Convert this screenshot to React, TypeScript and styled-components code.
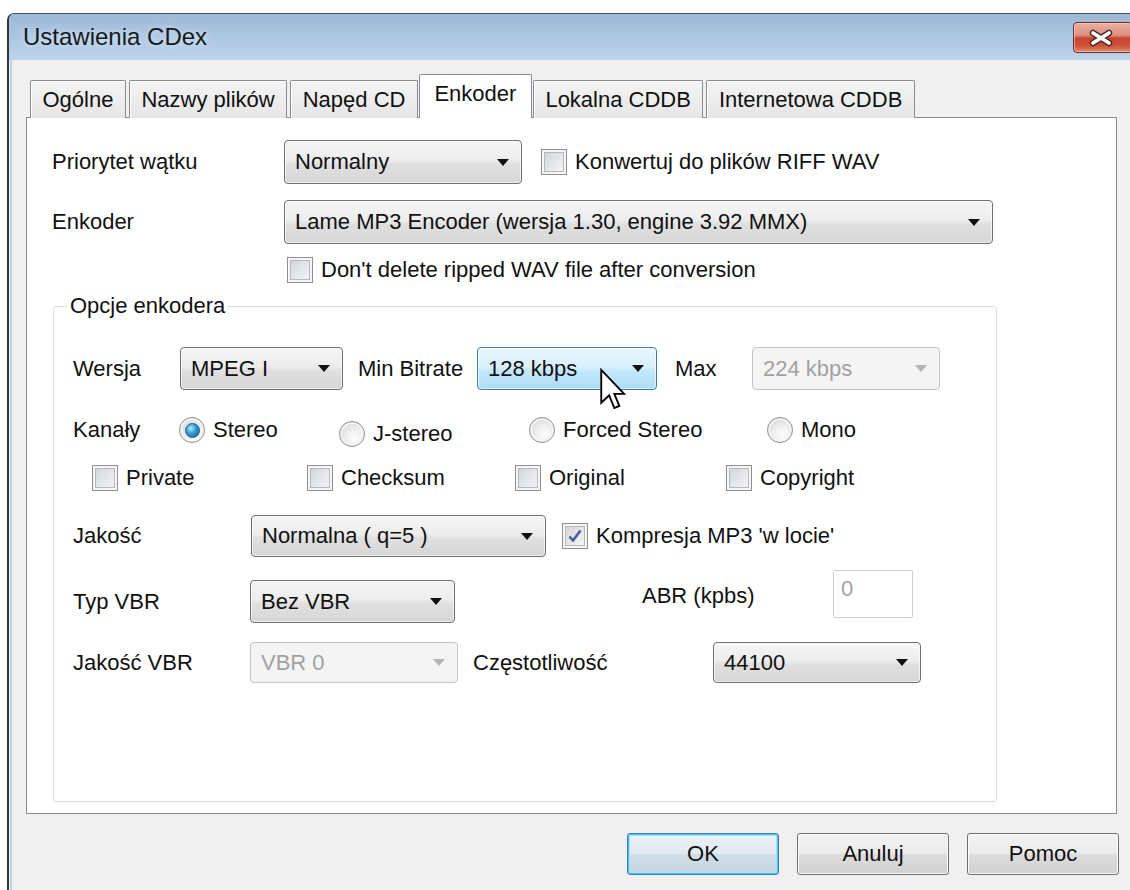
import React from "react";
import styled, { createGlobalStyle, css } from "styled-components";

const GlobalStyle = createGlobalStyle`
  html, body {
    margin: 0;
    padding: 0;
    background: #ffffff;
  }
  body {
    font-family: "Liberation Sans", Arial, sans-serif;
    color: #000;
  }
  * {
    box-sizing: border-box;
  }
`;

const Page = styled.div`
  width: 1130px;
  height: 890px;
  overflow: hidden;
  padding: 13px 0 0 7px;
`;

const Window = styled.div`
  width: 1140px;
  height: 900px;
  display: flex;
  flex-direction: column;
  border-top: 1px solid #44505e;
  border-left: 2px solid #2f3740;
  border-top-left-radius: 7px;
  overflow: hidden;
  background: #f0f0f0;
`;

const TitleBar = styled.div`
  height: 46px;
  flex: none;
  display: flex;
  align-items: center;
  justify-content: space-between;
  padding: 0 14px 0 14px;
  background: linear-gradient(#9db8d6, #b0c9e4 60%, #bdd3ea);
`;

const Caption = styled.span`
  font-size: 24px;
  color: #141a22;
  text-shadow: 0 0 6px rgba(255, 255, 255, 0.7);
  white-space: nowrap;
`;

const CloseButton = styled.div`
  width: 60px;
  height: 31px;
  margin-top: 1px;
  display: flex;
  align-items: center;
  padding-left: 13px;
  border: 1px solid #6d2e25;
  border-radius: 4px;
  background: linear-gradient(#eab0a4 0%, #df8f80 42%, #c9432f 52%, #cf5039 78%, #e2906f 100%);
  box-shadow: inset 0 0 0 1px rgba(255, 220, 210, 0.55);
`;

const Body = styled.div`
  flex: 1;
  padding: 15px 0 0 17px;
  background: #f0f0f0;
  box-shadow: inset 1px 0 0 #eef2f7, inset 3px 0 0 #bcd0e7;
`;

const TabStrip = styled.div`
  position: relative;
  z-index: 1;
  height: 43px;
  margin-bottom: -1px;
  padding-left: 4px;
  display: flex;
  align-items: flex-end;
`;

const Tab = styled.div<{ $active?: boolean }>`
  height: 38px;
  padding: 0 11.5px;
  margin-right: 3px;
  display: flex;
  align-items: center;
  font-size: 22px;
  white-space: nowrap;
  color: #111;
  border: 1px solid #898c95;
  border-bottom: none;
  border-radius: 2px 2px 0 0;
  background: linear-gradient(#f4f4f4, #e6e6e6);
  box-shadow: inset 1px 1px 0 #ffffff;
  ${({ $active }) =>
    $active &&
    css`
      height: 44px;
      padding: 0 14.5px 6px;
      margin: 0 1px 0 -2px;
      background: #ffffff;
      box-shadow: none;
    `}
`;

const Panel = styled.div`
  width: 1091px;
  height: 697px;
  padding: 22px 0 0 25px;
  background: #ffffff;
  border: 1px solid #898c95;
`;

const FormRow = styled.div<{ $h: number; $mt?: number; $ml?: number }>`
  display: flex;
  align-items: center;
  height: ${({ $h }) => $h}px;
  margin-top: ${({ $mt }) => $mt ?? 0}px;
  margin-left: ${({ $ml }) => $ml ?? 0}px;
`;

const FieldLabel = styled.span<{ $w?: number; $lift?: number; $pl?: number }>`
  flex: none;
  width: ${({ $w }) => ($w ? `${$w}px` : "auto")};
  padding-left: ${({ $pl }) => $pl ?? 0}px;
  margin-bottom: ${({ $lift }) => ($lift ?? 0) * 2}px;
  font-size: 22px;
  line-height: 26px;
  color: #111;
  white-space: nowrap;
`;

type ComboState = "normal" | "hot" | "disabled";

const ComboBox = styled.div<{ $w: number; $h?: number; $state?: ComboState; $ml?: number; $mt?: number }>`
  position: relative;
  flex: none;
  width: ${({ $w }) => $w}px;
  height: ${({ $h }) => $h ?? 43}px;
  margin-left: ${({ $ml }) => $ml ?? 0}px;
  margin-top: ${({ $mt }) => $mt ?? 0}px;
  display: flex;
  align-items: center;
  padding: 0 12px 0 10px;
  font-size: 22px;
  color: #111;
  border: 1px solid #707070;
  border-radius: 4px;
  background: linear-gradient(#f5f5f5 0%, #ededed 45%, #e0e0e0 55%, #d6d6d6 100%);
  box-shadow: inset 0 0 0 1px rgba(255, 255, 255, 0.6);
  ${({ $state }) =>
    $state === "hot" &&
    css`
      border-color: #3c7fb1;
      background: linear-gradient(#eaf6fd 0%, #d9f0fc 45%, #c4e8fc 55%, #aedcf6 100%);
    `}
  ${({ $state }) =>
    $state === "disabled" &&
    css`
      border-color: #c3c6c9;
      background: #f4f4f4;
      color: #a2a2a2;
      box-shadow: none;
    `}
`;

const ComboValue = styled.span`
  flex: 1;
  white-space: nowrap;
  overflow: hidden;
`;

const ComboArrow = styled.span<{ $disabled?: boolean }>`
  flex: none;
  width: 0;
  height: 0;
  border-left: 6px solid transparent;
  border-right: 6px solid transparent;
  border-top: 7px solid ${({ $disabled }) => ($disabled ? "#b4b4b4" : "#111")};
`;

const Pointer = styled.svg`
  position: absolute;
  left: 122px;
  top: 20px;
  z-index: 5;
`;

const CheckOption = styled.div<{ $w?: number; $ml?: number }>`
  flex: none;
  display: flex;
  align-items: center;
  gap: 8px;
  width: ${({ $w }) => ($w ? `${$w}px` : "auto")};
  margin-left: ${({ $ml }) => $ml ?? 0}px;
  font-size: 22px;
  color: #111;
  white-space: nowrap;
`;

const CheckSquare = styled.span`
  flex: none;
  width: 26px;
  height: 26px;
  display: flex;
  align-items: center;
  justify-content: center;
  border: 1px solid #8f8f8f;
  background: linear-gradient(135deg, #cdd0d4 0%, #e6e7e9 55%, #f8f8f8 100%);
  box-shadow: inset 0 0 0 2px #f6f6f6, inset 0 0 0 3px #b6bac0;
`;

const RadioOption = styled.div<{ $w?: number; $drop?: number }>`
  flex: none;
  display: flex;
  align-items: center;
  gap: 8px;
  width: ${({ $w }) => ($w ? `${$w}px` : "auto")};
  margin-top: ${({ $drop }) => ($drop ?? 0) * 2}px;
  font-size: 22px;
  color: #111;
  white-space: nowrap;
`;

const RadioCircle = styled.span<{ $on?: boolean }>`
  flex: none;
  width: 26px;
  height: 26px;
  border-radius: 50%;
  display: flex;
  align-items: center;
  justify-content: center;
  border: 1px solid #8e8f8f;
  background: radial-gradient(circle at 62% 68%, #fdfdfd 0%, #ececec 45%, #c8c9cb 100%);
  box-shadow: inset 0 0 0 2px #f4f4f4;
  ${({ $on }) =>
    $on &&
    css`
      &::after {
        content: "";
        width: 13px;
        height: 13px;
        border-radius: 50%;
        border: 1px solid #1b5a8c;
        background: radial-gradient(circle at 38% 34%, #b4ebff 0%, #3b9fd8 40%, #0c5792 100%);
      }
    `}
`;

const GroupBox = styled.fieldset`
  width: 944px;
  min-width: 0;
  margin: 10px 0 0 1px;
  padding: 0 0 118px 19px;
  border: 1px solid #d5dfe5;
  border-radius: 3px;
`;

const GroupLegend = styled.legend`
  margin-left: -6px;
  padding: 0 3px;
  font-size: 22px;
  line-height: 26px;
  color: #111;
`;

const EditBox = styled.div<{ $lift?: number }>`
  flex: none;
  width: 80px;
  height: 48px;
  margin-bottom: ${({ $lift }) => ($lift ?? 0) * 2}px;
  padding: 6px 0 0 7px;
  font-size: 22px;
  line-height: 24px;
  color: #a2a2a2;
  background: #ffffff;
  border: 1px solid #c7cdd4;
  border-radius: 2px;
`;

const ButtonRow = styled.div`
  width: 1093px;
  margin-top: 19px;
  display: flex;
  justify-content: flex-end;
  gap: 18px;
`;

const DialogButton = styled.button<{ $default?: boolean }>`
  width: 152px;
  height: 42px;
  padding: 0;
  font-family: "Liberation Sans", Arial, sans-serif;
  font-size: 22px;
  color: #111;
  border: 1px solid #707070;
  border-radius: 3px;
  background: linear-gradient(#f3f3f3 0%, #ebebeb 48%, #dddddd 52%, #d0d0d0 100%);
  box-shadow: inset 0 0 0 1px #fbfbfb;
  ${({ $default }) =>
    $default &&
    css`
      border-color: #3c7fb1;
      background: linear-gradient(#ebf2f6 0%, #e1eaf0 48%, #cfdee7 52%, #c3d6e1 100%);
      box-shadow: inset 0 0 0 1px #45c0f2, inset 0 0 0 2px #a6e1f8;
    `}
`;

const CloseGlyph = () => (
  <svg width="28" height="18" viewBox="0 0 28 18">
    <g strokeLinecap="round">
      <path d="M6 4 L22 14 M22 4 L6 14" stroke="#4a2620" strokeWidth="6.5" />
      <path d="M6 4 L22 14 M22 4 L6 14" stroke="#ffffff" strokeWidth="3.8" />
    </g>
  </svg>
);

const Tick = () => (
  <svg width="16" height="16" viewBox="0 0 16 16">
    <path
      d="M2.5 8.5 L6 12.5 L13.5 2.5"
      fill="none"
      stroke="#4a5f97"
      strokeWidth="2.6"
      strokeLinejoin="round"
    />
  </svg>
);

const ArrowPointer = () => (
  <Pointer width="26" height="44" viewBox="0 0 12.5 20.5">
    <path
      d="M0.6 0.6 V16.4 L4.4 12.8 L6.9 18.9 L9.3 17.9 L6.9 12.1 L11.6 12.1 Z"
      fill="#ffffff"
      stroke="#000000"
      strokeWidth="0.9"
      strokeLinejoin="miter"
    />
  </Pointer>
);

interface ComboProps {
  value: string;
  w: number;
  h?: number;
  state?: ComboState;
  ml?: number;
  mt?: number;
  children?: React.ReactNode;
}

const Combo = ({ value, w, h, state = "normal", ml, mt, children }: ComboProps) => (
  <ComboBox $w={w} $h={h} $state={state} $ml={ml} $mt={mt}>
    <ComboValue>{value}</ComboValue>
    <ComboArrow $disabled={state === "disabled"} />
    {children}
  </ComboBox>
);

const Check = ({ label, checked, w, ml }: { label: string; checked?: boolean; w?: number; ml?: number }) => (
  <CheckOption $w={w} $ml={ml}>
    <CheckSquare>{checked && <Tick />}</CheckSquare>
    <span>{label}</span>
  </CheckOption>
);

const Radio = ({ label, on, w, drop }: { label: string; on?: boolean; w?: number; drop?: number }) => (
  <RadioOption $w={w} $drop={drop}>
    <RadioCircle $on={on} />
    <span>{label}</span>
  </RadioOption>
);

const tabs = ["Ogólne", "Nazwy plików", "Napęd CD", "Enkoder", "Lokalna CDDB", "Internetowa CDDB"];

export default function App() {
  return (
    <Page>
      <GlobalStyle />
      <Window>
        <TitleBar>
          <Caption>Ustawienia CDex</Caption>
          <CloseButton>
            <CloseGlyph />
          </CloseButton>
        </TitleBar>
        <Body>
          <TabStrip>
            {tabs.map((t) => (
              <Tab key={t} $active={t === "Enkoder"}>
                {t}
              </Tab>
            ))}
          </TabStrip>
          <Panel>
            <FormRow $h={44}>
              <FieldLabel $w={232}>Priorytet wątku</FieldLabel>
              <Combo value="Normalny" w={238} h={44} />
              <Check label="Konwertuj do plików RIFF WAV" ml={19} />
            </FormRow>
            <FormRow $h={44} $mt={16}>
              <FieldLabel $w={232}>Enkoder</FieldLabel>
              <Combo value="Lame MP3 Encoder (wersja 1.30, engine 3.92 MMX)" w={709} h={44} />
            </FormRow>
            <FormRow $h={26} $mt={13} $ml={235}>
              <Check label="Don't delete ripped WAV file after conversion" />
            </FormRow>

            <GroupBox>
              <GroupLegend>Opcje enkodera</GroupLegend>
              <FormRow $h={43} $mt={28}>
                <FieldLabel $w={107}>Wersja</FieldLabel>
                <Combo value="MPEG I" w={163} />
                <FieldLabel $w={134} $pl={15}>
                  Min Bitrate
                </FieldLabel>
                <Combo value="128 kbps" w={180} state="hot">
                  <ArrowPointer />
                </Combo>
                <FieldLabel $w={95} $pl={18}>
                  Max
                </FieldLabel>
                <Combo value="224 kbps" w={188} state="disabled" />
              </FormRow>
              <FormRow $h={40} $mt={20}>
                <FieldLabel $w={106}>Kanały</FieldLabel>
                <Radio label="Stereo" on w={160} />
                <Radio label="J-stereo" w={190} drop={4} />
                <Radio label="Forced Stereo" w={238} />
                <Radio label="Mono" />
              </FormRow>
              <FormRow $h={40} $mt={8} $ml={19}>
                <Check label="Private" w={215} />
                <Check label="Checksum" w={208} />
                <Check label="Original" w={211} />
                <Check label="Copyright" />
              </FormRow>
              <FormRow $h={42} $mt={17}>
                <FieldLabel $w={178}>Jakość</FieldLabel>
                <Combo value="Normalna ( q=5 )" w={295} h={42} />
                <Check label="Kompresja MP3 'w locie'" checked ml={16} />
              </FormRow>
              <FormRow $h={43} $mt={23}>
                <FieldLabel $w={177}>Typ VBR</FieldLabel>
                <Combo value="Bez VBR" w={205} />
                <FieldLabel $w={378} $lift={6} $pl={187}>
                  ABR (kpbs)
                </FieldLabel>
                <EditBox $lift={8}>0</EditBox>
              </FormRow>
              <FormRow $h={41} $mt={19}>
                <FieldLabel $w={177}>Jakość VBR</FieldLabel>
                <Combo value="VBR 0" w={208} h={41} state="disabled" />
                <FieldLabel $w={255} $pl={15}>
                  Częstotliwość
                </FieldLabel>
                <Combo value="44100" w={208} h={41} />
              </FormRow>
            </GroupBox>
          </Panel>
          <ButtonRow>
            <DialogButton $default>OK</DialogButton>
            <DialogButton>Anuluj</DialogButton>
            <DialogButton>Pomoc</DialogButton>
          </ButtonRow>
        </Body>
      </Window>
    </Page>
  );
}
